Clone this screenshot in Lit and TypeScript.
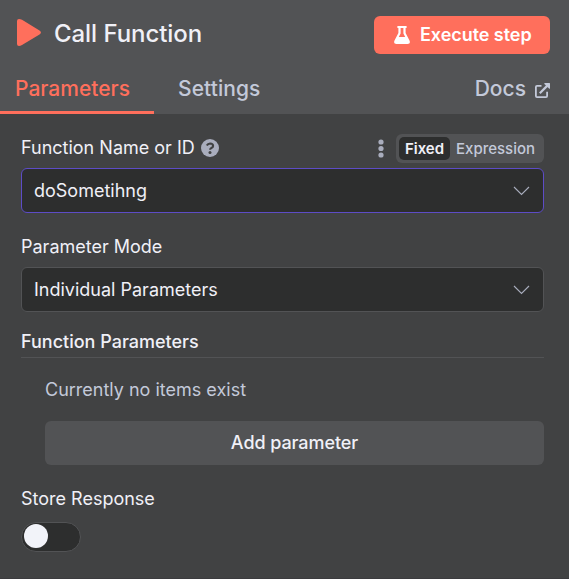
import { LitElement, html, css, svg } from "lit";
import { customElement, property } from "lit/decorators.js";

const chevron = html`<svg class="chevron" width="17" height="10" viewBox="0 0 17 10">
  <path d="M1 1 L8.5 8.4 L16 1" fill="none" stroke="#a9adbd" stroke-width="1.15" />
</svg>`;

@customElement("n-select")
class NSelect extends LitElement {
  @property() value = "";
  @property({ type: Boolean, reflect: true }) focused = false;
  static styles = css`
    :host {
      display: flex;
      align-items: center;
      justify-content: space-between;
      box-sizing: border-box;
      height: 45px;
      padding: 0 13px 0 12px;
      border: 1px solid #525355;
      border-radius: 6px;
      background: #2d2e2e;
      color: #f0f0f7;
      font-size: 18px;
      line-height: 24px;
    }
    :host([focused]) { border-color: #5d4cc6; }
    .chevron { display: block; }
  `;
  render() {
    return html`<span>${this.value}</span>${chevron}`;
  }
}

@customElement("app-root")
class AppRoot extends LitElement {
  static styles = css`
    :host {
      display: block;
      box-sizing: border-box;
      height: 579px;
      overflow: hidden;
      border-bottom: 1px solid #3b3b3e;
      background: #414243;
      color: #f0f0f7;
      font-family: Inter, "Liberation Sans", sans-serif;
      font-size: 18px;
      line-height: 24px;
    }
    svg { display: block; flex: none; }
    .header { height: 114px; background: #525355; }
    .title-row {
      display: flex;
      align-items: center;
      height: 54px;
      padding: 16px 19px 0 17px;
      box-sizing: border-box;
    }
    .play { margin-bottom: 5px; }
    .title { flex: 1; margin: 0 0 2px 12px; font-size: 24px; line-height: 36px; font-weight: 500; letter-spacing: -0.06px; }
    .execute {
      display: flex;
      align-items: center;
      box-sizing: border-box;
      width: 176px;
      height: 38px;
      padding-left: 20px;
      gap: 10px;
      border-radius: 6px;
      background: #ff6f5c;
      color: #fff;
      font-size: 18px;
      font-weight: 600;
      letter-spacing: -0.05px;
    }
    .tabs { display: flex; height: 60px; padding-right: 19px; color: #c3c9d9; font-size: 21px; line-height: 30px; font-weight: 500; }
    .tab { box-sizing: border-box; padding-top: 20px; }
    .tab.active { width: 154px; padding-left: 15px; border-bottom: 3px solid #ff6f5c; color: #ff6f5c; }
    .tab.settings { padding-left: 24px; letter-spacing: 0.07px; }
    .docs { display: flex; gap: 9px; margin-left: auto; padding-top: 20px; }
    .docs svg { margin-top: 9px; }
    .body { padding: 20px 25px 0 21px; }
    .label-row { display: flex; align-items: center; height: 29px; margin-bottom: 5px; }
    .label { margin-bottom: 2px; }
    .help { margin: 0 0 1px 6px; }
    .dots { margin-left: auto; }
    .switcher {
      display: flex;
      align-items: center;
      box-sizing: border-box;
      width: 148px;
      height: 29px;
      margin-left: 12px;
      padding: 3px;
      border-radius: 6px;
      background: #525355;
      color: #c3c9d9;
      font-size: 15px;
      line-height: 23px;
      font-weight: 500;
    }
    .chosen { width: 51px; height: 23px; margin-right: 6px; border-radius: 5px; background: #2d2e2e; color: #f0f0f7; text-align: center; font-weight: 600; }
    .mode { margin: 22px 0 8px; }
    .section { margin-top: 18px; padding-bottom: 3px; border-bottom: 1px solid #525355; font-weight: 500; }
    .items { padding: 20px 0 0 24px; }
    .empty { color: #c3c9d9; }
    .add { height: 44px; margin-top: 19px; border-radius: 6px; background: #525355; text-align: center; line-height: 44px; font-weight: 500; letter-spacing: -0.08px; }
    .store { margin-top: 22px; }
    .toggle { box-sizing: border-box; width: 60px; height: 30px; margin-top: 11px; padding: 1px 2px; border: 1px solid #525355; border-radius: 15px; background: #2d2e2e; }
    .knob { width: 24px; height: 24px; border-radius: 50%; background: #f2f3f9; }
  `;
  render() {
    return html`
      <div class="header">
        <div class="title-row">
          <svg class="play" width="25" height="27" viewBox="0 0 25 28" preserveAspectRatio="none">
            <path d="M0 2 Q0 0 2 0 Q3.4 0 5 .9 L22.5 11.8 Q25.4 14 22.5 16.2 L5 27 Q3.4 28 2 28 Q0 28 0 26Z" fill="#ff6f5c" />
          </svg>
          <span class="title">Call Function</span>
          <div class="execute">
            <svg width="16" height="18" viewBox="0 0 16 18">
              <path fill="#fff" fill-rule="evenodd" d="M3.8 0 H12.2 Q12.7 0 12.7 .5 V1.3 Q12.7 1.9 12.2 1.9 H11.6 V7 L15.5 14.4 Q16.9 18 13.6 18 H2.4 Q-.9 18 .5 14.4 L4.4 7 V1.9 H3.8 Q3.3 1.9 3.3 1.3 V.5 Q3.3 0 3.8 0Z M6.6 1.9 V7.6 L4.8 11 H11.2 L9.4 7.6 V1.9Z" />
            </svg>
            <span>Execute step</span>
          </div>
        </div>
        <div class="tabs">
          <div class="tab active">Parameters</div>
          <div class="tab settings">Settings</div>
          <div class="docs">
            <span>Docs</span>
            <svg width="15" height="15" viewBox="0 0 15 15">
              <path d="M6.5 2.9 H2 Q.9 2.9 .9 4 V13 Q.9 14.1 2 14.1 H11 Q12.1 14.1 12.1 13 V8.8" fill="none" stroke="#c3c9d9" stroke-width="1.8" />
              <path d="M4.8 10.2 L12.6 2.4" stroke="#c3c9d9" stroke-width="2.2" />
              <path d="M9.4 0 H14.4 Q15 0 15 .6 V5.6 Q14.6 6 14 5.6 L9.4 1Z" fill="#c3c9d9" />
            </svg>
          </div>
        </div>
      </div>
      <div class="body">
        <div class="label-row">
          <span class="label">Function Name or ID</span>
          <svg class="help" width="18" height="18" viewBox="0 0 18 18">
            <circle cx="9" cy="9" r="9" fill="#a9adbd" />
            <path d="M5.8 6.6 Q6.9 4.5 9 4.5 Q12.1 4.6 12.1 6.9 Q12.1 8.2 10.4 9 Q9.1 9.6 9.1 10.8" fill="none" stroke="#414243" stroke-width="2.1" />
            <circle cx="9" cy="13.4" r="1.5" fill="#414243" />
          </svg>
          <svg class="dots" width="6" height="19" viewBox="0 0 6 19">
            ${[3, 9.5, 16].map((y) => svg`<circle cx="3" cy=${y} r="2.6" fill="#a9adbd" />`)}
          </svg>
          <div class="switcher"><span class="chosen">Fixed</span><span>Expression</span></div>
        </div>
        <n-select value="doSometihng" focused></n-select>
        <div class="mode">Parameter Mode</div>
        <n-select value="Individual Parameters"></n-select>
        <div class="section">Function Parameters</div>
        <div class="items">
          <div class="empty">Currently no items exist</div>
          <div class="add">Add parameter</div>
        </div>
        <div class="store">Store Response</div>
        <div class="toggle"><div class="knob"></div></div>
      </div>
    `;
  }
}
